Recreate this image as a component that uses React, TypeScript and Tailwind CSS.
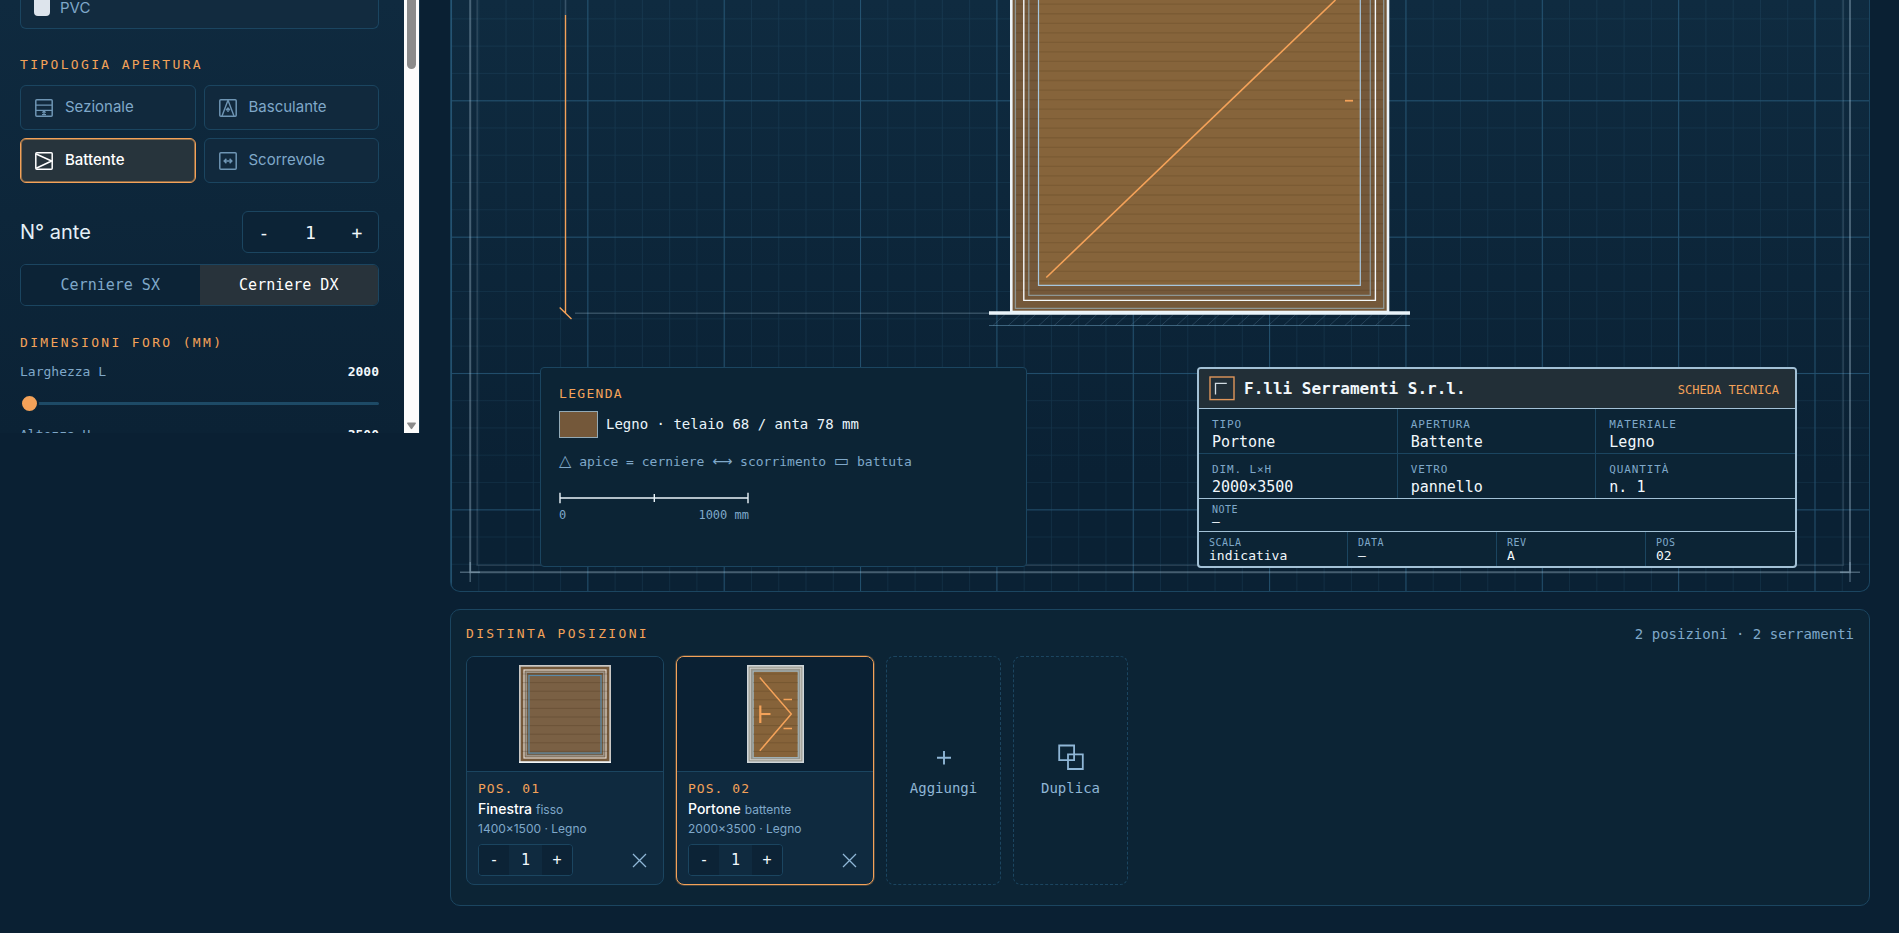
import { useState } from 'react';
import type { ReactNode } from 'react';

const MONO = "font-['DejaVu_Sans_Mono','Liberation_Mono',monospace]";

// Icone tipologia
const IconFrame = ({ children }: { children: ReactNode }) => (
  <svg width="18" height="18" viewBox="0 0 18 18" fill="none" stroke="currentColor" strokeWidth="1.5" className="shrink-0">
    <rect x="0.8" y="0.8" width="16.4" height="16.4" rx="1" />
    {children}
  </svg>
);

const TIPOLOGIE = [
  {
    id: 'sezionale',
    label: 'Sezionale',
    icon: (
      <IconFrame>
        <path d="M1 6.2h16M1 11.3h16" strokeWidth="1.3" />
        <path d="M9 11.3v4.2M7 15.6h4M7.4 13.6L9 11.9l1.6 1.7" strokeWidth="1.2" />
      </IconFrame>
    ),
  },
  {
    id: 'basculante',
    label: 'Basculante',
    icon: (
      <IconFrame>
        <path d="M3 17L9 1.2 15 17" strokeWidth="1.4" />
        <path d="M9 13V9.2M7 11.2l2-2.2 2 2.2" strokeWidth="1.4" />
      </IconFrame>
    ),
  },
  {
    id: 'battente',
    label: 'Battente',
    icon: (
      <IconFrame>
        <path d="M1.2 2L16.6 9 1.2 16.2" />
      </IconFrame>
    ),
  },
  {
    id: 'scorrevole',
    label: 'Scorrevole',
    icon: (
      <IconFrame>
        <path d="M5.2 9h7.6M7.4 6.8L5.2 9l2.2 2.2M10.6 6.8L12.8 9l-2.2 2.2" />
      </IconFrame>
    ),
  },
];

const SectionTitle = ({ children }: { children: ReactNode }) => (
  <h2 className={`${MONO} text-[13px] leading-5 tracking-[0.18em] text-[#f4a259] uppercase`}>{children}</h2>
);

const Misura = ({ id, label, value }: { id: string; label: string; value: number }) => {
  const [v, setV] = useState(value);
  return (
    <div className="h-[63px]">
      <div className={`${MONO} flex justify-between text-[13px] leading-5`}>
        <label htmlFor={id} className="text-[#7fa8c9]">{label}</label>
        <span className="font-bold text-[#f2f8fc]">{v}</span>
      </div>
      <input
        id={id}
        type="range"
        min={2000}
        max={6000}
        value={v}
        onChange={(e) => setV(Number(e.target.value))}
        className="mt-[20px] block h-[3px] w-full appearance-none rounded-full bg-[#1d4a66] [&::-webkit-slider-thumb]:size-[19px] [&::-webkit-slider-thumb]:appearance-none [&::-webkit-slider-thumb]:rounded-full [&::-webkit-slider-thumb]:border-2 [&::-webkit-slider-thumb]:border-[#0c2436] [&::-webkit-slider-thumb]:bg-[#f4a259]"
      />
    </div>
  );
};

const Sidebar = () => {
  const [tipo, setTipo] = useState('battente');
  const [ante, setAnte] = useState(1);
  const [cerniere, setCerniere] = useState('DX');

  return (
    <aside className="flex h-[433px] w-[420px] shrink-0 overflow-hidden border-r border-[#123349]">
      <div className="min-w-0 flex-1 bg-linear-to-b from-[#0f2a3f] to-[#0b2235] pr-[25px] pl-5">
        <button className="flex h-[29px] w-full items-start gap-[10px] rounded-b-md border border-t-0 border-[#1b4560] bg-[#122b3f] pl-[13px] text-[15px] leading-[15px] text-[#7fa8c9]">
          <span className="h-4 w-4 shrink-0 rounded-b bg-[#dde4ec]" />
          PVC
        </button>

        <div className="pt-[26px]">
          <SectionTitle>Tipologia apertura</SectionTitle>
          <div className="mt-[10px] grid grid-cols-2 gap-2">
            {TIPOLOGIE.map((t) => (
              <button
                key={t.id}
                aria-pressed={tipo === t.id}
                onClick={() => setTipo(t.id)}
                className={
                  tipo === t.id
                    ? 'flex h-[45px] items-center gap-3 rounded-md border border-[#f4a259] bg-[#27343c] pl-[14px] text-[15px] font-medium text-white shadow-[inset_0_0_0_1px_#8a6a48]'
                    : 'flex h-[45px] items-center gap-3 rounded-md border border-[#1b4560] bg-[#11293d] pl-[14px] text-[15px] text-[#7fa8c9]'
                }
              >
                <span className={tipo === t.id ? '' : 'opacity-85'}>{t.icon}</span>
                {t.label}
              </button>
            ))}
          </div>
        </div>

        <div className="flex items-center justify-between pt-7">
          <span className="text-[20px] text-[#e4f0f7]">N° ante</span>
          <div className={`${MONO} flex h-[42px] w-[137px] items-center overflow-hidden rounded-md border border-[#1b4560] bg-[#0c2336] text-[18px] text-[#f2f8fc]`}>
            <button className="h-full w-[42px]" aria-label="Riduci ante" onClick={() => setAnte(Math.max(1, ante - 1))}>-</button>
            <span className="flex-1 text-center">{ante}</span>
            <button className="h-full w-[42px]" aria-label="Aumenta ante" onClick={() => setAnte(ante + 1)}>+</button>
          </div>
        </div>

        <div className={`${MONO} mt-[11px] grid h-[42px] grid-cols-2 overflow-hidden rounded-md border border-[#1b4560] text-[15px]`}>
          {['SX', 'DX'].map((c) => (
            <button
              key={c}
              aria-pressed={cerniere === c}
              onClick={() => setCerniere(c)}
              className={cerniere === c ? 'bg-[#28333b] text-white' : 'bg-[#0c2336] text-[#7fa8c9]'}
            >
              Cerniere {c}
            </button>
          ))}
        </div>

        <div className="pt-[27px]">
          <SectionTitle>Dimensioni foro (mm)</SectionTitle>
          <div className="pt-[9px]">
            <Misura id="larghezza" label="Larghezza L" value={2000} />
            <Misura id="altezza" label="Altezza H" value={3500} />
          </div>
        </div>
      </div>

      {/* Barra di scorrimento */}
      <div className="flex w-[15px] flex-col items-center justify-between bg-[#fcfcfc] pb-[3px]">
        <div className="h-[69px] w-[9px] rounded-b-full bg-[#8b8b8b]" />
        <svg width="9" height="8" viewBox="0 0 9 8" fill="#8b8b8b">
          <path d="M0 1.2Q0 0.5 .8 .5h7.4q.8 0 .8.7L5.2 6.8q-.7.9-1.4 0z" />
        </svg>
      </div>
    </aside>
  );
};

const Disegno = () => {
  const doghe = Array.from({ length: 31 }, (_, i) => 4.2 + i * 9.54);
  const tratti = Array.from({ length: 27 }, (_, i) => 542 + i * 15.3);
  return (
    <svg
      viewBox="0 0 1418 591"
      preserveAspectRatio="xMidYMax slice"
      className="absolute inset-0 h-full w-full"
      fill="none"
      aria-hidden="true"
    >
      <defs>
        <pattern id="minor" width="27.27" height="27.27" patternUnits="userSpaceOnUse" y="-8.9">
          <path d="M27.27 0H0V27.27" stroke="#3c7da3" strokeOpacity="0.17" strokeWidth="1.6" />
        </pattern>
        <pattern id="major" width="136.35" height="136.35" patternUnits="userSpaceOnUse" y="-36">
          <path d="M136.35 0H0V136.35" stroke="#3c83ad" strokeOpacity="0.4" strokeWidth="2" />
        </pattern>
      </defs>
      <rect width="1418" height="591" fill="url(#minor)" />
      <rect width="1418" height="591" fill="url(#major)" />

      {/* Squadratura */}
      <g stroke="#b8d3e6">
        <path d="M19.2 0V572.3H1399V0" strokeOpacity="0.34" strokeWidth="2" />
        <path d="M26.2 0V565.3H1392.3V0" strokeOpacity="0.16" strokeWidth="1.6" />
        <path d="M9 572.3H29M19.2 562V582M1389 572.3H1409M1399 562V582" strokeOpacity="0.36" strokeWidth="1.4" />
      </g>

      {/* Quota altezza */}
      <path d="M114.5 0V15M124 313.2H538" stroke="#a9c8de" strokeOpacity="0.26" strokeWidth="1.6" />
      <path d="M114.5 15V313M108.7 307.5L120.5 319" stroke="#f4a259" strokeWidth="1.4" />

      {/* Portone */}
      <rect x="560.3" y="-400" width="376.7" height="712" fill="#74583a" stroke="#eef5fa" strokeWidth="2.6" />
      <rect x="587.5" y="-400" width="321.8" height="685.3" fill="#86643b" />
      <path d={doghe.map((y) => `M564.5 ${y}H932.5`).join('')} stroke="#3a2610" strokeOpacity="0.15" strokeWidth="1.3" />
      <path d="M564.4 0V308.4H932.7V0M577.8 0V295.4H919.3V0" stroke="#9db8c4" strokeOpacity="0.65" strokeWidth="1.3" />
      <path d="M572.8 0V300.4H924.4V0" stroke="#f4f8fb" strokeWidth="1.4" />
      <path d="M587.5 0V285.4H909.3V0" stroke="#a6c6de" strokeWidth="1.2" />
      <path d="M595.3 277.5L884.5 0" stroke="#f4a259" strokeWidth="1.6" />
      <path d="M894 100.7H902" stroke="#f4a259" strokeWidth="1.8" />

      {/* Terreno */}
      <path d={tratti.map((x) => `M${x} 325.5l12 -11`).join('')} stroke="#7fa8c9" strokeOpacity="0.22" strokeWidth="1" />
      <path d="M538 325.5H959" stroke="#6fa3c4" strokeOpacity="0.5" strokeWidth="1.1" />
      <path d="M538 313H959" stroke="#eaf4fa" strokeWidth="3.4" />
    </svg>
  );
};

const Legenda = () => (
  <section className={`${MONO} h-[200px] rounded border border-[#1b4560] bg-[#0c2435] px-[18px] pt-4`}>
    <h3 className="text-[13px] leading-5 tracking-widest text-[#f4a259]">LEGENDA</h3>
    <div className="mt-[7px] flex items-center gap-2">
      <span className="h-[27px] w-[39px] border border-[#93aab6] bg-[#74583a]" />
      <span className="pb-[2px] text-[14px] leading-5 text-[#eaf4fa]">Legno · telaio 68 / anta 78 mm</span>
    </div>
    <p className="mt-[14px] text-[13px] leading-5 text-[#7fa8c9]">
      <span className="font-['DejaVu_Sans',sans-serif] text-[16px] leading-none">△</span> apice = cerniere{' '}
      <span className="font-['DejaVu_Sans',sans-serif] text-[14px] leading-none">⟷</span> scorrimento{' '}
      <span className="font-['DejaVu_Sans',sans-serif] text-[16px] leading-none">▭</span> battuta
    </p>
    <div className="mt-5 w-[190px]">
      <svg viewBox="0 0 190 12" className="block h-3 w-full" stroke="#eaf4fa" fill="none" aria-hidden="true">
        <path d="M1 6H189M1 .7V11.3M95.3 2V10M189 .7V11.3" strokeWidth="1.4" />
      </svg>
      <div className="mt-[3px] flex justify-between text-[12px] leading-4 text-[#7fa8c9]">
        <span>0</span>
        <span>1000 mm</span>
      </div>
    </div>
  </section>
);

const DATI = [
  ['TIPO', 'Portone'],
  ['APERTURA', 'Battente'],
  ['MATERIALE', 'Legno'],
  ['DIM. L×H', '2000×3500'],
  ['VETRO', 'pannello'],
  ['QUANTITÀ', 'n. 1'],
];

const PIEDE = [
  ['SCALA', 'indicativa'],
  ['DATA', '—'],
  ['REV', 'A'],
  ['POS', '02'],
];

const Cartiglio = () => (
  <section className={`${MONO} flex h-[201px] flex-col overflow-hidden rounded border-2 border-[#a3c1d6] bg-[#0c2435] text-[#f2f8fc]`}>
    <header className="flex h-[40px] shrink-0 items-center border-b border-[#a3c1d6] bg-[#222f37] pr-[16px] pl-[10px]">
      <svg width="26" height="25" viewBox="0 0 26 25" fill="none">
        <rect x="1" y="1" width="24" height="22.6" stroke="#e0965a" strokeWidth="1.4" />
        <path d="M6.5 18.5V7.3H17.8" stroke="#d3dde3" strokeWidth="1.3" />
      </svg>
      <h3 className="ml-[9px] text-[16px] font-bold">F.lli Serramenti S.r.l.</h3>
      <span className="mt-[3px] ml-auto text-[12px] text-[#f4a259]">SCHEDA TECNICA</span>
    </header>
    <dl className="grid h-[90px] shrink-0 grid-cols-3 grid-rows-2 border-b border-[#a3c1d6]">
      {DATI.map(([k, v]) => (
        <div key={k} className="border-r border-b border-[#1b4560] pt-[8px] pl-[13px] nth-[3n]:border-r-0 nth-[n+4]:border-b-0">
          <dt className="text-[11px] leading-4 tracking-[0.08em] text-[#7fa8c9]">{k}</dt>
          <dd className="text-[15px] leading-[18px]">{v}</dd>
        </div>
      ))}
    </dl>
    <dl className="h-[33px] shrink-0 border-b border-[#a3c1d6] pt-1 pl-[13px]">
      <dt className="text-[10px] leading-[13px] tracking-wider text-[#7fa8c9]">NOTE</dt>
      <dd className="text-[13px] leading-3">—</dd>
    </dl>
    <dl className="grid flex-1 grid-cols-4">
      {PIEDE.map(([k, v]) => (
        <div key={k} className="border-r border-[#1b4560] pt-1 pl-[10px] last:border-r-0">
          <dt className="text-[10px] leading-[13px] tracking-wider text-[#7fa8c9]">{k}</dt>
          <dd className="text-[13px] leading-[14px]">{v}</dd>
        </div>
      ))}
    </dl>
  </section>
);

const MiniFinestra = () => (
  <svg width="92" height="98" viewBox="0 0 92 98" fill="none">
    <rect x="0.8" y="0.8" width="90.4" height="96.4" fill="#74583a" stroke="#c9c8c6" strokeWidth="1.8" />
    <rect x="5" y="5" width="82" height="88" stroke="#e3dcd5" strokeWidth="1.2" />
    <rect x="7.2" y="7.2" width="77.6" height="83.6" stroke="#9a9389" strokeWidth="1.6" />
    <rect x="9.7" y="10.4" width="72.6" height="78.2" fill="#7a6044" stroke="#6f6a60" strokeWidth="1.8" />
    <path
      d={Array.from({ length: 10 }, (_, i) => `M3 ${9 + i * 8.6}H89`).join('')}
      stroke="#3a2610"
      strokeOpacity="0.22"
    />
    <path d="M10 10.5H82V88H10z" stroke="#5b8aa8" strokeWidth="1.1" />
    <path d="M0 97.2H92" stroke="#f2f5f7" strokeWidth="1.4" />
  </svg>
);

const MiniPortone = () => (
  <svg width="57" height="98" viewBox="0 0 57 98" fill="none">
    <rect x="0.8" y="0.8" width="55.4" height="96.4" fill="#96958c" stroke="#cfd5d8" strokeWidth="1.6" />
    <rect x="3.2" y="3.2" width="50.6" height="91.6" stroke="#d3d3cd" strokeWidth="1" />
    <rect x="6.2" y="6.2" width="45" height="86.4" fill="#86633a" stroke="#a0b4bb" strokeWidth="1.1" />
    <path
      d={Array.from({ length: 10 }, (_, i) => `M6 ${9 + i * 8.6}H51`).join('')}
      stroke="#3a2610"
      strokeOpacity="0.2"
    />
    <path d="M12.8 12.5L44.3 49L12.8 85.8" stroke="#f4a259" strokeWidth="1.5" />
    <path d="M36.5 34.5H45M36.5 63.5H45" stroke="#f4a259" strokeWidth="1.5" />
    <path d="M13.3 40.5V58M13.3 49H23.5" stroke="#f4a259" strokeWidth="2.2" />
  </svg>
);

const POSIZIONI = [
  { pos: '01', nome: 'Finestra', tipo: 'fisso', dim: '1400×1500 · Legno', disegno: <MiniFinestra />, attiva: false },
  { pos: '02', nome: 'Portone', tipo: 'battente', dim: '2000×3500 · Legno', disegno: <MiniPortone />, attiva: true },
];

const CardPosizione = ({ p }: { p: (typeof POSIZIONI)[number] }) => {
  const [qta, setQta] = useState(1);
  return (
    <article
      className={
        p.attiva
          ? 'flex w-[198px] flex-col overflow-hidden rounded-lg border border-[#f4a259] bg-[#0f2a3f] shadow-[0_0_0_1px_rgba(244,162,89,0.25)]'
          : 'flex w-[198px] flex-col overflow-hidden rounded-lg border border-[#1b4560] bg-[#0f2a3f]'
      }
    >
      <div className="flex h-[115px] items-center justify-center border-b border-[#1b4560] bg-[#0a2033]">
        {p.disegno}
      </div>
      <div className="px-[11px] pt-[7px]">
        <div className={`${MONO} text-[13px] leading-5 tracking-[0.08em] text-[#f4a259]`}>POS. {p.pos}</div>
        <div className="text-[14px] leading-5 text-[#7fa8c9]">
          <span className="font-medium text-white">{p.nome}</span> <span className="text-[12px]">{p.tipo}</span>
        </div>
        <div className="text-[12px] leading-[18px] text-[#7fa8c9]">{p.dim}</div>
        <div className="mt-[6px] flex items-center justify-between">
          <div className={`${MONO} flex h-8 w-[95px] items-center overflow-hidden rounded border border-[#1b4560] text-[15px] text-[#f2f8fc]`}>
            <button className="h-full w-[30px] bg-[#0c2336]" aria-label="Meno" onClick={() => setQta(Math.max(1, qta - 1))}>-</button>
            <span className="flex-1 text-center">{qta}</span>
            <button className="h-full w-[30px] bg-[#0c2336]" aria-label="Più" onClick={() => setQta(qta + 1)}>+</button>
          </div>
          <button aria-label="Elimina posizione" className="mr-[5px] text-[#8fb6d6]">
            <svg width="15" height="15" viewBox="0 0 15 15" stroke="currentColor" strokeWidth="1.3" className="block">
              <path d="M1 1L14 14M14 1L1 14" />
            </svg>
          </button>
        </div>
      </div>
    </article>
  );
};

const Distinta = () => (
  <section className="rounded-[10px] border border-[#1b4560] bg-[#0c2435] px-[15px] pt-[14px] pb-5">
    <div className={`${MONO} flex items-center justify-between`}>
      <SectionTitle>Distinta posizioni</SectionTitle>
      <span className="text-[14px] leading-5 text-[#7fa8c9]">2 posizioni · 2 serramenti</span>
    </div>
    <div className="mt-3 flex h-[229px] gap-3">
      {POSIZIONI.map((p) => (
        <CardPosizione key={p.pos} p={p} />
      ))}
      <button className={`${MONO} flex w-[115px] flex-col items-center justify-center gap-[6px] rounded-lg border border-dashed border-[#1b4560] text-[14px] leading-5 text-[#8fb6d6]`}>
        <svg width="14" height="28" viewBox="0 0 14 28" stroke="currentColor" strokeWidth="1.9">
          <path d="M0 13.7H14M7 7V20.6" />
        </svg>
        Aggiungi
      </button>
      <button className={`${MONO} flex w-[115px] flex-col items-center justify-center gap-[6px] rounded-lg border border-dashed border-[#1b4560] text-[14px] leading-5 text-[#8fb6d6]`}>
        <svg width="26" height="28" viewBox="0 0 26 28" fill="none" stroke="currentColor" strokeWidth="1.8">
          <path d="M1.2 1.5h14.9v14.6H1.2zM10 10.4h14.8V25H10z" />
        </svg>
        Duplica
      </button>
    </div>
  </section>
);

export default function App() {
  return (
    <div className="flex min-h-screen items-start bg-[#0a2033] font-['Inter',sans-serif]">
      <Sidebar />
      <main className="flex min-w-0 flex-1 flex-col gap-[17px] pr-[29px] pb-[27px] pl-[30px]">
        <section className="relative overflow-hidden rounded-b-[10px] border border-t-0 border-[#1b4560] bg-linear-to-b from-[#0f2b40] to-[#0a2134] to-80% pt-[367px] pb-[23px]">
          <Disegno />
          <div className="relative grid grid-cols-[487fr_170fr_600fr] items-start pr-[72px] pl-[89px]">
            <Legenda />
            <div />
            <Cartiglio />
          </div>
        </section>
        <Distinta />
      </main>
    </div>
  );
}
